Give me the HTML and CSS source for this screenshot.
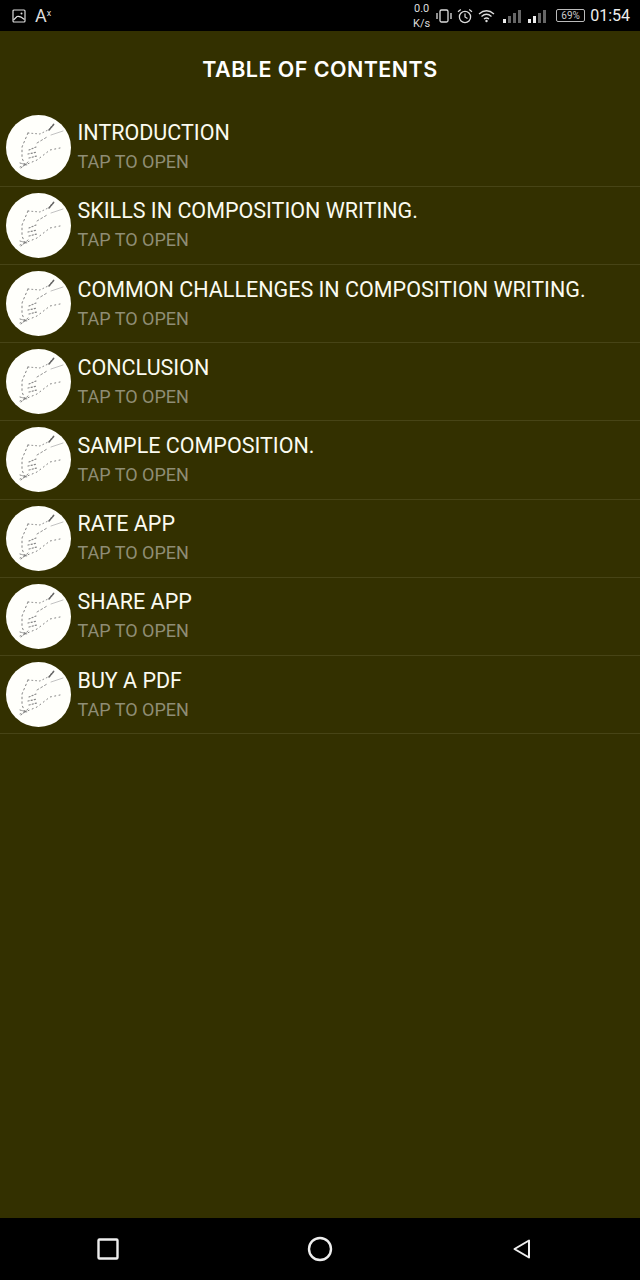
FILE: index.html
```html
<!DOCTYPE html>
<html lang="en">
<head>
    <meta charset="UTF-8">
    <meta name="viewport" content="width=device-width, initial-scale=1.0">
    <title>Table of Contents</title>
    <link rel="stylesheet" href="styles.css">
</head>
<body>
    <svg class="defs" width="0" height="0">
        <symbol id="sketch" viewBox="0 0 65 65">
            <circle cx="32.5" cy="32.5" r="32.5" fill="#fffffb"/>
            <g fill="none" stroke="#888" stroke-width="0.9" stroke-linecap="round">
                <path d="M22 18 L34 19 L44 14" stroke-dasharray="1 2.8"/>
                <path d="M22 18 L16 32 L16 43 L19 50" stroke="#777" stroke-dasharray="1.6 3"/>
                <path d="M43 15 L48 9" stroke="#666" stroke-width="1.6" stroke-dasharray="1.6 1.2"/>
                <path d="M45 20 L57 16" stroke="#bbb"/>
                <path d="M31 28 L41 22" stroke-dasharray="2 2.4"/>
                <path d="M14 52 L31 45 L44 35 L54 33" stroke="#777" stroke-dasharray="1 3.4"/>
                <path d="M23 35 L30 32 M22 39 L31 37 M23 43 L31 41" stroke-width="1.2" stroke-dasharray="1.2 2"/>
                <path d="M14 48 L21 50 M15 53 L22 47" stroke="#777" stroke-dasharray="1.4 1.4"/>
            </g>
        </symbol>
    </svg>

    <div class="status-bar">
        <div class="status-left">
            <svg class="icon-picture" width="14" height="14" viewBox="0 0 14 14">
                <rect x="1" y="1" width="12" height="12" rx="1" fill="none" stroke="#ddd" stroke-width="1.2"/>
                <path d="M1.5 11 L5 7.5 Q8 6.5 12.5 10.5" fill="none" stroke="#ddd" stroke-width="1.2"/>
                <circle cx="9.5" cy="4.5" r="1" fill="#ddd"/>
            </svg>
            <span class="font-size-icon">A<sup>x</sup></span>
        </div>
        <div class="status-right">
            <span class="speed">0.0<br>K/s</span>
            <svg class="icon-vibrate" width="16" height="16" viewBox="0 0 16 16">
                <rect x="4" y="2" width="8" height="12" rx="1.5" fill="none" stroke="#ddd" stroke-width="1.3"/>
                <path d="M1 5 V11 M15 5 V11" stroke="#ddd" stroke-width="1.3"/>
            </svg>
            <svg width="16" height="16" viewBox="0 0 16 16">
                <circle cx="8" cy="9" r="5.6" fill="none" stroke="#ddd" stroke-width="1.3"/>
                <path d="M8 5.5 V9 L10.5 10.5 M1 3.8 L3.8 1.5 M15 3.8 L12.2 1.5" fill="none" stroke="#ddd" stroke-width="1.2"/>
            </svg>
            <svg width="17" height="14" viewBox="0 0 17 14">
                <path d="M1 5 Q8.5 -1.5 16 5 M3.5 7.5 Q8.5 3 13.5 7.5 M6 10 Q8.5 8 11 10" fill="none" stroke="#ddd" stroke-width="1.3"/>
                <circle cx="8.5" cy="12" r="1.2" fill="#ddd"/>
            </svg>
            <div class="signal first">
                <i class="bar-1"></i><i class="bar-2 dim"></i><i class="bar-3 dim"></i><i class="bar-4 dim"></i>
            </div>
            <div class="signal">
                <i class="bar-1"></i><i class="bar-2"></i><i class="bar-3 dim"></i><i class="bar-4 dim"></i>
            </div>
            <div class="battery"><span>69%</span></div>
            <span class="clock">01:54</span>
        </div>
    </div>

    <div class="content">
        <h1 class="page-title">TABLE OF CONTENTS</h1>
        <ul class="toc">
            <li class="toc-row">
                <svg class="thumb"><use href="#sketch"/></svg>
                <div><div class="toc-title">INTRODUCTION</div><div class="toc-sub">TAP TO OPEN</div></div>
            </li>
            <li class="toc-row">
                <svg class="thumb"><use href="#sketch"/></svg>
                <div><div class="toc-title">SKILLS IN COMPOSITION WRITING.</div><div class="toc-sub">TAP TO OPEN</div></div>
            </li>
            <li class="toc-row">
                <svg class="thumb"><use href="#sketch"/></svg>
                <div><div class="toc-title">COMMON CHALLENGES IN COMPOSITION WRITING.</div><div class="toc-sub">TAP TO OPEN</div></div>
            </li>
            <li class="toc-row">
                <svg class="thumb"><use href="#sketch"/></svg>
                <div><div class="toc-title">CONCLUSION</div><div class="toc-sub">TAP TO OPEN</div></div>
            </li>
            <li class="toc-row">
                <svg class="thumb"><use href="#sketch"/></svg>
                <div><div class="toc-title">SAMPLE COMPOSITION.</div><div class="toc-sub">TAP TO OPEN</div></div>
            </li>
            <li class="toc-row">
                <svg class="thumb"><use href="#sketch"/></svg>
                <div><div class="toc-title">RATE APP</div><div class="toc-sub">TAP TO OPEN</div></div>
            </li>
            <li class="toc-row">
                <svg class="thumb"><use href="#sketch"/></svg>
                <div><div class="toc-title">SHARE APP</div><div class="toc-sub">TAP TO OPEN</div></div>
            </li>
            <li class="toc-row">
                <svg class="thumb"><use href="#sketch"/></svg>
                <div><div class="toc-title">BUY A PDF</div><div class="toc-sub">TAP TO OPEN</div></div>
            </li>
        </ul>
    </div>

    <div class="nav-bar">
        <svg width="24" height="24" viewBox="0 0 24 24">
            <rect x="2.5" y="2.5" width="19" height="19" rx="1" fill="none" stroke="#eee" stroke-width="2.4"/>
        </svg>
        <svg width="26" height="26" viewBox="0 0 26 26">
            <circle cx="13" cy="13" r="11" fill="none" stroke="#eee" stroke-width="2.4"/>
        </svg>
        <svg width="20" height="22" viewBox="0 0 20 22">
            <path d="M17 2.5 V19.5 L2.5 11 Z" fill="none" stroke="#eee" stroke-width="2" stroke-linejoin="round"/>
        </svg>
    </div>
</body>
</html>
```

FILE: styles.css
```css
* {
    box-sizing: border-box;
}
html, body {
    height: 100%;
}
body {
    margin: 0;
    display: flex;
    flex-direction: column;
    height: 1280px;
    background: #333000;
    font-family: Roboto, "Liberation Sans", sans-serif;
    overflow: hidden;
}
.defs {
    display: none;
}
.status-bar {
    height: 31px;
    flex: none;
    background: #000;
    color: #ddd;
    display: flex;
    justify-content: space-between;
    align-items: center;
    padding: 0 10px 0 12px;
}
.status-left, .status-right {
    display: flex;
    align-items: center;
}
.status-left {
    gap: 9px;
}
.font-size-icon {
    font-size: 18px;
    line-height: 18px;
}
.font-size-icon sup {
    font-size: 9px;
    line-height: 0;
    vertical-align: 6px;
}
.status-right {
    gap: 5px;
}
.speed {
    font-size: 11px;
    line-height: 15px;
    text-align: center;
}
.icon-vibrate {
    margin-left: 1px;
}
.signal {
    display: flex;
    align-items: flex-end;
    gap: 2px;
    height: 14px;
    margin-left: 2px;
}
.signal.first {
    margin-left: 3px;
}
.signal i {
    width: 3px;
    background: #eee;
}
.signal i.dim {
    background: #666;
}
.bar-1 { height: 4px; }
.bar-2 { height: 7px; }
.bar-3 { height: 10px; }
.bar-4 { height: 13px; }
.battery {
    width: 29px;
    height: 13px;
    margin-left: 5px;
    border: 1px solid #bbb;
    border-radius: 2px;
    font-size: 10px;
    line-height: 11px;
    text-align: center;
    color: #ccc;
}
.clock {
    font-size: 16px;
    color: #eee;
}
.content {
    flex: 1;
}
.page-title {
    margin: 0;
    height: 77.6px;
    padding-bottom: 2px;
    display: flex;
    align-items: center;
    justify-content: center;
    color: #fff;
    font-family: Inter, sans-serif;
    font-size: 21.5px;
    font-weight: 600;
    letter-spacing: 0.45px;
}
.toc {
    list-style: none;
    margin: 0;
    padding: 0;
}
.toc-row {
    height: 78.2px;
    display: flex;
    align-items: center;
    gap: 6.5px;
    padding-left: 6px;
    padding-top: 1px;
    border-bottom: 1px solid #474416;
}
.thumb {
    width: 65px;
    height: 65px;
    flex: none;
    margin-top: -1px;
}
.toc-title {
    font-size: 21.5px;
    line-height: 29px;
    color: #fbfbf0;
}
.toc-sub {
    font-size: 18px;
    line-height: 30px;
    color: #8f8d75;
}
.nav-bar {
    height: 62px;
    flex: none;
    background: #000;
    display: grid;
    grid-template-columns: 212px 212px 192px;
    justify-items: center;
    align-items: center;
    padding-left: 2px;
}
```
